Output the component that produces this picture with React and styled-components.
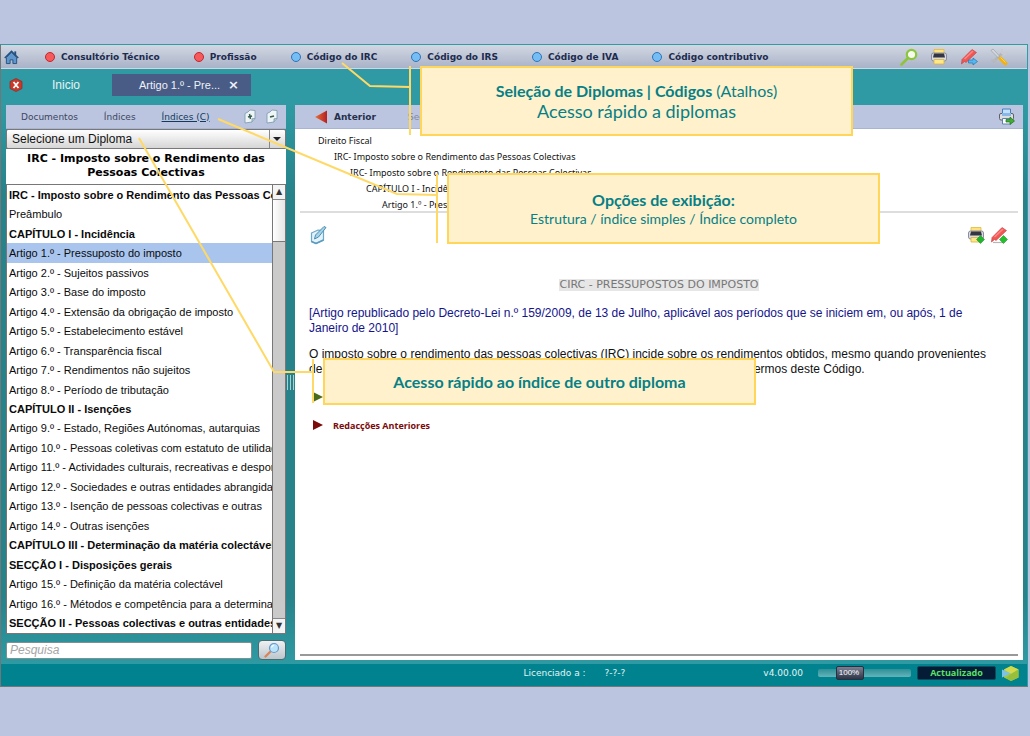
import React, { useState } from "react";
import styled, { createGlobalStyle } from "styled-components";

const GlobalStyle = createGlobalStyle`
  * {
    box-sizing: border-box;
  }
  body {
    margin: 0;
    background: #bcc5df;
    font-family: "Liberation Sans", Arial, sans-serif;
    font-size: 12px;
  }
  button, input, select {
    font: inherit;
    color: inherit;
    margin: 0;
    padding: 0;
    border: 0;
    background: none;
  }
  button, select {
    cursor: pointer;
  }
  h1, h2, p, ul, ol {
    margin: 0;
    padding: 0;
    list-style: none;
  }
  svg {
    display: block;
  }
`;

const shortcuts = [
  { label: "Consultório Técnico", color: "red" },
  { label: "Profissão", color: "red" },
  { label: "Código do IRC", color: "blue" },
  { label: "Código do IRS", color: "blue" },
  { label: "Código de IVA", color: "blue" },
  { label: "Código contributivo", color: "blue" },
];

const entries = [
  { text: "IRC - Imposto sobre o Rendimento das Pessoas Colectivas", bold: true },
  { text: "Preâmbulo" },
  { text: "CAPÍTULO I - Incidência", bold: true },
  { text: "Artigo 1.º - Pressuposto do imposto" },
  { text: "Artigo 2.º - Sujeitos passivos" },
  { text: "Artigo 3.º - Base do imposto" },
  { text: "Artigo 4.º - Extensão da obrigação de imposto" },
  { text: "Artigo 5.º - Estabelecimento estável" },
  { text: "Artigo 6.º - Transparência fiscal" },
  { text: "Artigo 7.º - Rendimentos não sujeitos" },
  { text: "Artigo 8.º - Período de tributação" },
  { text: "CAPÍTULO II - Isenções", bold: true },
  { text: "Artigo 9.º - Estado, Regiões Autónomas, autarquias" },
  { text: "Artigo 10.º - Pessoas coletivas com estatuto de utilidade pública" },
  { text: "Artigo 11.º - Actividades culturais, recreativas e desportivas" },
  { text: "Artigo 12.º - Sociedades e outras entidades abrangidas" },
  { text: "Artigo 13.º - Isenção de pessoas colectivas e outras" },
  { text: "Artigo 14.º - Outras isenções" },
  { text: "CAPÍTULO III - Determinação da matéria colectável", bold: true },
  { text: "SECÇÃO I - Disposições gerais", bold: true },
  { text: "Artigo 15.º - Definição da matéria colectável" },
  { text: "Artigo 16.º - Métodos e competência para a determinação" },
  { text: "SECÇÃO II - Pessoas colectivas e outras entidades", bold: true },
];

const trail = [
  "Direito Fiscal",
  "IRC- Imposto sobre o Rendimento das Pessoas Colectivas",
  "IRC- Imposto sobre o Rendimento das Pessoas Colectivas",
  "CAPÍTULO I - Incidência",
  "Artigo 1.º - Pressuposto do imposto",
];

/* ---------- icons ---------- */

const HomeIcon = () => (
  <svg width="15" height="16" viewBox="0 0 16 16">
    <path d="M11 2h2v4h-2z" fill="#24507f" />
    <path d="M2.5 8.5 8 3l5.500 5.500V15h-4v-4h-3v4h-4z" fill="#5f96cc" stroke="#24507f" />
    <path d="M.8 9 8 1.800 15.200 9" fill="none" stroke="#24507f" strokeWidth="1.600" />
  </svg>
);

const SearchIcon = () => (
  <svg width="18" height="18" viewBox="0 0 18 18">
    <path d="M1.500 16.500 7.500 10.500" stroke="#8fc43a" strokeWidth="2.600" strokeLinecap="round" />
    <circle cx="11.500" cy="6.500" r="4.700" fill="#f4faee" stroke="#8cc63a" strokeWidth="2.200" />
    <path d="M9 6.500a2.500 2.500 0 0 1 2.500-2.500" fill="none" stroke="#fff" />
  </svg>
);

const PrinterIcon = ({ add }) => (
  <svg width="18" height="18" viewBox="0 0 18 18">
    <path d="M4 1.500h10v4H4z" fill="#ffe37a" stroke="#e0b93e" strokeWidth=".8" />
    <rect x="1.500" y="5" width="15" height="8" rx="2" fill="#d9dbe4" stroke="#8b8d99" />
    <path d="M4 5.500h10l1 4H3z" fill="#333540" />
    <path d="M4 11.500h10v4.500H4z" fill="#ffe88c" stroke="#d7b13b" strokeWidth=".8" />
    {add && (
      <path d="m13.500 9.500 4 4-4 4-4-4z" fill="#22b52c" stroke="#14841c" strokeWidth=".5" />
    )}
  </svg>
);

const MarkerIcon = ({ add }) => (
  <svg width="18" height="18" viewBox="0 0 18 18">
    <path d="M3 16.500h10" stroke="#b5b5b5" strokeWidth="1.200" />
    <path d="M1.500 16 2 11.500 12 1.500 16.500 4.500 6 14.500 4.500 13.500z" fill="#ef5757" stroke="#c23b3e" strokeWidth=".6" />
    <path d="M4.500 11 13 3" stroke="#ff8781" strokeWidth="1.500" />
    {add ? (
      <path d="m13.500 9.500 4 4-4 4-4-4z" fill="#22c02c" stroke="#14841c" strokeWidth=".5" />
    ) : (
      <path d="M8.500 12h4.500v-2l4.500 3.500-4.500 3.500v-2H8.500z" fill="#55b8f0" stroke="#2274b4" strokeWidth=".7" />
    )}
  </svg>
);

const ToolsIcon = () => (
  <svg width="18" height="18" viewBox="0 0 18 18">
    <path d="M3 14 13 4.500" stroke="#b3b6bb" strokeWidth="2.600" />
    <path d="M12 1v4l2.500 1.500L17 4.500" fill="none" stroke="#c8cbd0" strokeWidth="2" />
    <path d="M1 12.500 4 12l2 2.500-1 2.500" fill="none" stroke="#b7babf" strokeWidth="1.800" />
    <path d="m1 2.500 2-1.500 6.500 7-1.500 1.500z" fill="#d5d8dc" stroke="#92969c" strokeWidth=".6" />
    <path d="m10.500 10.500 5 5" stroke="#f4b10b" strokeWidth="3.800" strokeLinecap="round" />
    <path d="m10.500 9.500 5 5" stroke="#ffd654" />
  </svg>
);

const CloseAllIcon = () => (
  <svg width="14" height="14" viewBox="0 0 14 14">
    <path d="M7 .5 13 3.500v7L7 13.500 1 10.500v-7z" fill="#c9382a" stroke="#8f2a20" strokeWidth=".7" />
    <path d="m4.500 4 5 6m0-6-5 6" stroke="#fff" strokeWidth="1.800" />
  </svg>
);

const PageIcon = ({ minus }) => (
  <svg width="12" height="15" viewBox="0 0 12 15">
    <path d="M1 4.500 4 3l2-2 5 .5v8L8 13l-7 1z" fill="#edf5f7" stroke="#7896a8" strokeWidth=".8" />
    <path d="M8 13V9.800l3-.3" fill="#b7cbd3" stroke="#7896a8" strokeWidth=".8" />
    <path d="m4 8 4-1" stroke="#365b4b" strokeWidth="1.500" />
    {!minus && <path d="M5.500 5 6.500 10" stroke="#365b4b" strokeWidth="1.500" />}
  </svg>
);

const BackArrow = () => (
  <svg width="12" height="14" viewBox="0 0 12 14">
    <defs>
      <linearGradient id="back" x1="0" x2="1">
        <stop offset="0" stopColor="#e5723a" />
        <stop offset="1" stopColor="#b51f22" />
      </linearGradient>
    </defs>
    <path d="M0 7 12 .5v13z" fill="url(#back)" />
  </svg>
);

const ExportIcon = () => (
  <svg width="17" height="17" viewBox="0 0 17 17">
    <path d="M4.500 1h8v6h-8z" fill="#bfe0ff" stroke="#4b7fb9" />
    <rect x="1.500" y="5.500" width="14" height="6.500" rx="1.500" fill="#dcdee0" stroke="#5c6168" />
    <path d="M4 5h9v3H4z" fill="#8ab7e6" />
    <path d="M4.500 10.500h8V16h-8z" fill="#fff" stroke="#5c83ad" />
    <path d="M8 11.500h4V9l4.500 4-4.500 3.500v-2.500H8z" fill="#41ad35" stroke="#1f6e1b" strokeWidth=".7" />
  </svg>
);

const NoteIcon = () => (
  <svg width="17" height="20" viewBox="0 0 17 20">
    <path d="M1.500 8 8 5l5.500.5V15L6 18.500l-4.500-2z" fill="#e4f2f9" stroke="#6aa9c9" strokeWidth="1.200" />
    <path d="M1.500 16.500 6 18.500l7.500-3.500" fill="none" stroke="#5a9cc0" strokeWidth="1.500" />
    <path d="m4.500 14 1-4L14 1.500l2 1L8.500 12z" fill="#a7d3e8" stroke="#4a8fb4" />
  </svg>
);

const LensIcon = () => (
  <svg width="16" height="16" viewBox="0 0 16 16">
    <path d="m1.500 14.500 5-5" stroke="#d98657" strokeWidth="2.400" strokeLinecap="round" />
    <circle cx="10" cy="6" r="4.500" fill="#b9e2fb" stroke="#6699c8" strokeWidth="1.200" />
    <path d="M7.500 5.500A2.500 2.500 0 0 1 10 3.500" fill="none" stroke="#fff" strokeWidth="1.200" />
  </svg>
);

const CubeIcon = () => (
  <svg width="17" height="15" viewBox="0 0 17 15">
    <path d="M9 0 16.500 3.500v8L9 15 2 11.500v-8z" fill="#a7c83a" />
    <path d="M9 0 16.500 3.500 9 8 2 3.500z" fill="#d3db4c" />
    <path d="m9 8 7.500-4.500v8L9 15 4 12z" fill="#97bf3b" />
    <path d="m0 3.500 9 4L0 11.500z" fill="#7cc3e6" />
  </svg>
);

/* ---------- layout ---------- */

const Page = styled.div`
  position: relative;
  display: flex;
  min-height: 100vh;
  padding: 44px 2px 49px 0;
`;

const Window = styled.div`
  flex: 1;
  min-width: 0;
  display: flex;
  flex-direction: column;
  border: 1px solid #2f9ba3;
  border-left-color: #6f7778;
  border-bottom-color: #6f7778;
  background: #2f9aa3;
`;

const MenuBar = styled.nav`
  display: flex;
  align-items: center;
  justify-content: space-between;
  height: 24px;
  padding: 0 19px 0 3px;
  background: linear-gradient(#d2d7e2, #a9b3c8);
  border-bottom: 1px solid #cdd8e4;
`;

const MenuGroup = styled.div`
  display: flex;
  align-items: center;
  gap: ${(props) => props.$gap};
`;

const MenuLink = styled.a`
  display: flex;
  align-items: center;
  gap: 6px;
  font: bold 9px "DejaVu Sans", Verdana, sans-serif;
  color: #1d2b4f;
  text-decoration: none;
  white-space: nowrap;

  &::before {
    content: "";
    width: 8px;
    height: 8px;
    border-radius: 50%;
    border: 1px solid ${(props) => (props.$color === "red" ? "#c4262c" : "#2f74b8")};
    background: ${(props) => (props.$color === "red" ? "#f75a5a" : "#74bdf5")};
  }
`;

const HomeLink = styled.a`
  margin-right: 26px;
`;

const IconButton = styled.button`
  display: flex;
  align-items: center;
  justify-content: center;
`;

const TabBar = styled.div`
  display: flex;
  align-items: center;
  height: 36px;
  padding: 0 8px 5px;
  color: #e6f4f5;
`;

const StartTab = styled.button`
  margin: 0 32px 0 29px;
`;

const OpenTab = styled.div`
  display: flex;
  align-items: center;
  gap: 8px;
  height: 22px;
  padding: 0 12px 0 27px;
  background: #495c86;
  font-size: 11px;
  color: #eef1f7;

  button:last-child {
    font: bold 13px "DejaVu Sans", sans-serif;
  }
`;

const Workspace = styled.main`
  flex: 1;
  display: grid;
  grid-template-columns: 280px 9px minmax(0, 1fr);
  padding: 0 4px 4px 5px;
  background: linear-gradient(#2f9aa3, #28828a 16%, #28828a 88%, #2f9aa3);
`;

const Sidebar = styled.aside`
  display: flex;
  flex-direction: column;
  min-width: 0;
`;

const PanelHeader = styled.div`
  display: flex;
  align-items: center;
  height: 24px;
  background: #bcc5df;
  border-bottom: 1px solid #a9b3d2;
  font: 9px "DejaVu Sans", Verdana, sans-serif;
  color: #26314d;
`;

const SideTabs = styled(PanelHeader)`
  gap: 26px;
  padding: 0 8px 0 15px;
`;

const SideTab = styled.button`
  text-decoration: ${(props) => (props.$active ? "underline" : "none")};
  color: ${(props) => (props.$active ? "#123a5c" : "#3b4560")};
`;

const TreeButtons = styled.div`
  display: flex;
  gap: 10px;
  margin-left: auto;
`;

const SelectBox = styled.label`
  position: relative;
  display: block;
  border: 1px solid #787878;
  border-radius: 2px;
  background: linear-gradient(#fff, #d6d6d6);

  select {
    display: block;
    width: 100%;
    height: 18px;
    padding-left: 5px;
    appearance: none;
    color: #111;
  }

  &::before {
    content: "";
    position: absolute;
    right: 15px;
    top: 0;
    bottom: 0;
    border-left: 1px solid #888;
  }

  &::after {
    content: "";
    position: absolute;
    right: 4px;
    top: 7px;
    border: 4px solid transparent;
    border-top-color: #222;
    border-bottom: 0;
  }
`;

const SideTitle = styled.h1`
  padding: 3px 8px 4px;
  background: #fff;
  font: bold 11px/14px "DejaVu Sans", Verdana, sans-serif;
  text-align: center;
`;

const ListFrame = styled.div`
  flex: 1;
  display: flex;
  border: 1px solid #777;
  background: #fff;
`;

const EntryList = styled.ul`
  flex: 1;
  min-width: 0;
  display: grid;
  grid-auto-rows: minmax(18px, 1fr);
`;

const Entry = styled.li`
  overflow: hidden;
  background: ${(props) => (props.$selected ? "#a9c5ee" : "transparent")};

  button {
    display: block;
    width: 100%;
    height: 100%;
    padding-left: 2px;
    text-align: left;
    white-space: nowrap;
    font-size: 11px;
    font-weight: ${(props) => (props.$bold ? "bold" : "normal")};
    color: #0b0b0b;
  }
`;

const ScrollBar = styled.div`
  display: flex;
  flex-direction: column;
  width: 13px;
  background: #cacaca;
  border-left: 1px solid #777;
`;

const ScrollButton = styled.button`
  height: 15px;
  border: 0 solid #888;
  border-width: ${(props) => (props.$end ? "1px 0 0" : "0 0 1px")};
  margin-top: ${(props) => (props.$end ? "auto" : "0")};
  background: #f4f4f4;
  font: 8px/14px "DejaVu Sans", sans-serif;
  color: #333;
`;

const ScrollThumb = styled.div`
  height: 42px;
  background: linear-gradient(90deg, #fff, #e5e5e5);
  border-bottom: 1px solid #777;
`;

const SearchForm = styled.form`
  display: flex;
  align-items: center;
  gap: 6px;
  height: 26px;
  padding-top: 6px;

  input {
    flex: 1;
    min-width: 0;
    height: 17px;
    padding-left: 3px;
    border: 1px solid #7d9092;
    border-radius: 2px;
    background: #fff;
  }
  input::placeholder {
    font-style: italic;
    color: #a6a6a6;
  }
  button {
    width: 28px;
    height: 20px;
    border: 1px solid #4a6b70;
    border-radius: 4px;
    background: linear-gradient(#eef1f3, #bcc6cc);
  }
`;

const Splitter = styled.div`
  display: flex;
  align-items: center;
  justify-content: center;

  &::before {
    content: "";
    width: 5px;
    height: 15px;
    border: solid #a9d0d3;
    border-width: 0 1px;
    background: linear-gradient(#a9d0d3, #a9d0d3) center / 1px 100% no-repeat;
  }
`;

const Reader = styled.section`
  display: flex;
  flex-direction: column;
  min-width: 0;
  background: #fff;
`;

const ReaderHeader = styled(PanelHeader)`
  padding: 0 8px 0 20px;
`;

const Previous = styled.button`
  display: flex;
  align-items: center;
  gap: 7px;
  font-weight: bold;
`;

const Next = styled.button`
  margin: 0 auto 0 32px;
  color: #8089a3;
`;

const Trail = styled.ol`
  margin: 0 5px;
  padding: 4px 0 0 18px;
  border-bottom: 2px solid #ddd;
  height: 84px;
  font: 9px/16px "Noto Sans", Tahoma, sans-serif;
  color: #111;
`;

const TrailItem = styled.li`
  padding-left: ${(props) => props.$level * 16}px;
`;

const DocTools = styled.div`
  display: flex;
  align-items: center;
  gap: 5px;
  padding: 12px 15px 0;

  button:first-child {
    margin-right: auto;
  }
`;

const Article = styled.article`
  flex: 1;
  margin: 0 5px 4px;
  padding: 34px 9px 0;
  border-bottom: 2px solid #999;
  line-height: 15px;
  color: #111;

  h2 {
    width: fit-content;
    margin: 0 auto 15px;
    background: #e6e6e6;
    font: 11px/12px "DejaVu Sans", Verdana, sans-serif;
    color: #777;
  }
`;

const Paragraph = styled.p`
  margin: 0 10px 11px 0;
  color: ${(props) => (props.$note ? "#14148c" : "#111")};

  &:last-of-type {
    margin-bottom: 6px;
  }
`;

const Disclosure = styled.button`
  display: flex;
  align-items: center;
  gap: 10px;
  height: 28px;
  padding-left: 4px;
  font: bold 9px "Open Sans", sans-serif;
  color: #7b0a0a;

  &::before {
    content: "";
    border: 5px solid transparent;
    border-left: 10px solid ${(props) => props.$color};
    border-right: 0;
  }
`;

const StatusBar = styled.footer`
  display: flex;
  align-items: center;
  justify-content: flex-end;
  height: 22px;
  padding: 0 8px 4px;
  background: #00838f;
  font: 9px "DejaVu Sans", Verdana, sans-serif;
  color: #e2f3f4;
`;

const License = styled.span`
  margin-right: 138px;

  b {
    margin-left: 16px;
    font-weight: normal;
  }
`;

const ZoomControl = styled.label`
  position: relative;
  margin: 0 6px 0 15px;

  input {
    display: block;
    width: 93px;
    height: 14px;
    appearance: none;
  }
  input::-webkit-slider-runnable-track {
    height: 8px;
    border-radius: 2px;
    background: linear-gradient(#2f8f97, #63b4ba);
  }
  input::-webkit-slider-thumb {
    appearance: none;
    width: 28px;
    height: 14px;
    margin-top: -3px;
    border: 1px solid #27303f;
    border-radius: 2px;
    background: linear-gradient(#7b8194, #2d3447);
  }
  span {
    position: absolute;
    left: 17px;
    top: 0;
    width: 28px;
    font: 8px/14px "Liberation Sans", Arial, sans-serif;
    text-align: center;
    color: #fff;
    pointer-events: none;
  }
`;

const UpdateBadge = styled.span`
  width: 79px;
  margin-right: 6px;
  border: 1px solid #0d4a5c;
  border-radius: 2px;
  background: #041c35;
  font: bold 9px/12px "Open Sans", sans-serif;
  text-align: center;
  color: #5ee068;
`;

/* ---------- help callouts, drawn over the window ---------- */

const Connectors = styled.svg`
  position: absolute;
  top: 0;
  left: 0;
  pointer-events: none;
  fill: none;
  stroke: #ffd966;
  stroke-width: 2;
`;

const Callout = styled.div`
  position: absolute;
  left: ${(props) => props.$x}px;
  top: ${(props) => props.$y}px;
  width: 433px;
  height: ${(props) => props.$h}px;
  display: flex;
  flex-direction: column;
  align-items: center;
  justify-content: center;
  border: 2px solid #ffd55a;
  background: #fff1cc;
  font-family: Lato, Calibri, sans-serif;
  font-size: 16px;
  line-height: 21px;
  color: #067f86;
`;

const Large = styled.span`
  font-size: 18px;
`;

const Small = styled.span`
  font-size: 14px;
  line-height: 18px;
`;

const App = () => {
  const [selected, setSelected] = useState(3);

  return (
    <Page>
      <GlobalStyle />
      <Window>
        <MenuBar>
          <MenuGroup $gap="0">
            <HomeLink href="#" aria-label="Início">
              <HomeIcon />
            </HomeLink>
            <MenuGroup $gap="34px">
              {shortcuts.map((item) => (
                <MenuLink key={item.label} href="#" $color={item.color}>
                  {item.label}
                </MenuLink>
              ))}
            </MenuGroup>
          </MenuGroup>
          <MenuGroup $gap="12px">
            <IconButton aria-label="Pesquisar"><SearchIcon /></IconButton>
            <IconButton aria-label="Imprimir"><PrinterIcon /></IconButton>
            <IconButton aria-label="Marcadores"><MarkerIcon /></IconButton>
            <IconButton aria-label="Ferramentas"><ToolsIcon /></IconButton>
          </MenuGroup>
        </MenuBar>

        <TabBar>
          <IconButton aria-label="Fechar tudo"><CloseAllIcon /></IconButton>
          <StartTab>Inicio</StartTab>
          <OpenTab>
            <button>Artigo 1.º - Pre...</button>
            <button aria-label="Fechar separador">×</button>
          </OpenTab>
        </TabBar>

        <Workspace>
          <Sidebar>
            <SideTabs>
              <SideTab>Documentos</SideTab>
              <SideTab>Índices</SideTab>
              <SideTab $active>Índices (C)</SideTab>
              <TreeButtons>
                <IconButton aria-label="Expandir"><PageIcon /></IconButton>
                <IconButton aria-label="Recolher"><PageIcon minus /></IconButton>
              </TreeButtons>
            </SideTabs>
            <SelectBox>
              <select aria-label="Diploma">
                <option>Selecione um Diploma</option>
              </select>
            </SelectBox>
            <SideTitle>IRC - Imposto sobre o Rendimento das Pessoas Colectivas</SideTitle>
            <ListFrame>
              <EntryList>
                {entries.map((entry, i) => (
                  <Entry key={entry.text} $bold={entry.bold} $selected={i === selected}>
                    <button onClick={() => setSelected(i)}>{entry.text}</button>
                  </Entry>
                ))}
              </EntryList>
              <ScrollBar>
                <ScrollButton aria-label="Subir">▲</ScrollButton>
                <ScrollThumb />
                <ScrollButton $end aria-label="Descer">▼</ScrollButton>
              </ScrollBar>
            </ListFrame>
            <SearchForm onSubmit={(e) => e.preventDefault()}>
              <input type="text" placeholder="Pesquisa" aria-label="Pesquisa" />
              <IconButton aria-label="Pesquisar"><LensIcon /></IconButton>
            </SearchForm>
          </Sidebar>

          <Splitter />

          <Reader>
            <ReaderHeader>
              <Previous><BackArrow />Anterior</Previous>
              <Next>Seguinte</Next>
              <IconButton aria-label="Exportar"><ExportIcon /></IconButton>
            </ReaderHeader>
            <Trail>
              {trail.map((text, i) => (
                <TrailItem key={i} $level={i}>{text}</TrailItem>
              ))}
            </Trail>
            <DocTools>
              <IconButton aria-label="Anotar"><NoteIcon /></IconButton>
              <IconButton aria-label="Imprimir artigo"><PrinterIcon add /></IconButton>
              <IconButton aria-label="Marcar artigo"><MarkerIcon add /></IconButton>
            </DocTools>
            <Article>
              <h2>CIRC - PRESSUPOSTOS DO IMPOSTO</h2>
              <Paragraph $note>
                [Artigo republicado pelo Decreto-Lei n.º 159/2009, de 13 de Julho,
                aplicável aos períodos que se iniciem em, ou após, 1 de Janeiro de 2010]
              </Paragraph>
              <Paragraph>
                O imposto sobre o rendimento das pessoas colectivas (IRC) incide sobre os
                rendimentos obtidos, mesmo quando provenientes de actos ilícitos, no período
                de tributação, pelos respectivos sujeitos passivos, nos termos deste Código.
              </Paragraph>
              <Disclosure $color="#4a6b1c" aria-label="Notas" />
              <Disclosure $color="#7b0a0a">Redacções Anteriores</Disclosure>
            </Article>
          </Reader>
        </Workspace>

        <StatusBar>
          <License>Licenciado a : <b>?-?-?</b></License>
          <span>v4.00.00</span>
          <ZoomControl>
            <input type="range" min="0" max="100" defaultValue="27" aria-label="Zoom" />
            <span>100%</span>
          </ZoomControl>
          <UpdateBadge>Actualizado</UpdateBadge>
          <CubeIcon />
        </StatusBar>
      </Window>

      <Connectors width="1030" height="736" viewBox="0 0 1030 736">
        <path d="M342 63 370 86 410 87M410 66V135" />
        <path d="M218 119 397 194 437 195M437 174V243" />
        <path d="M139 138 274 372 313 372M313 359V403" />
      </Connectors>
      <Callout $x={420} $y={66} $h={70}>
        <span><b>Seleção de Diplomas | Códigos</b> (Atalhos)</span>
        <Large>Acesso rápido a diplomas</Large>
      </Callout>
      <Callout $x={447} $y={173} $h={71}>
        <b>Opções de exibição:</b>
        <Small>Estrutura / índice simples / Índice completo</Small>
      </Callout>
      <Callout $x={323} $y={358} $h={47}>
        <b>Acesso rápido ao índice de outro diploma</b>
      </Callout>
    </Page>
  );
};

export default App;
